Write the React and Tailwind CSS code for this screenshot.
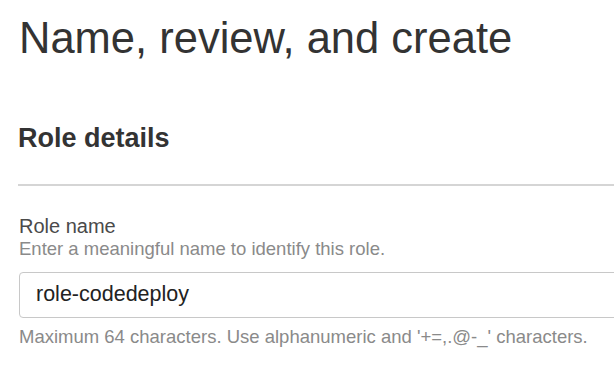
export default function App() {
  return (
    <div className="w-[614px] h-[380px] overflow-hidden bg-white" style={{ fontFamily: '"Liberation Sans", Arial, sans-serif' }}>
      <div className="pl-[19px]">
        <h1 className="mt-[17px] text-[43.5px] leading-none text-[#333333] font-normal">Name, review, and create</h1>
        <h2 className="mt-[64px] ml-[-1px] text-[27px] leading-none font-bold text-[#333333]">Role details</h2>
        <div className="mt-[32px] ml-[-1px] h-[2px] bg-[#d5d5d5]" />
        <div className="mt-[31px] text-[20px] leading-[18px] text-[#4a4a4a]">Role name</div>
        <div className="mt-[5px] text-[18.5px] leading-[18px] text-[#8a8a8a]">Enter a meaningful name to identify this role.</div>
        <div className="mt-[14px] w-[640px] h-[46px] flex items-center border border-[#c8c8c8] rounded-[4px] pl-[16px] text-[21.5px] text-[#222222]">
          role-codedeploy
        </div>
        <div className="mt-[10px] text-[18.5px] leading-[18px] text-[#8a8a8a]">Maximum 64 characters. Use alphanumeric and '+=,.@-_' characters.</div>
      </div>
    </div>
  );
}
